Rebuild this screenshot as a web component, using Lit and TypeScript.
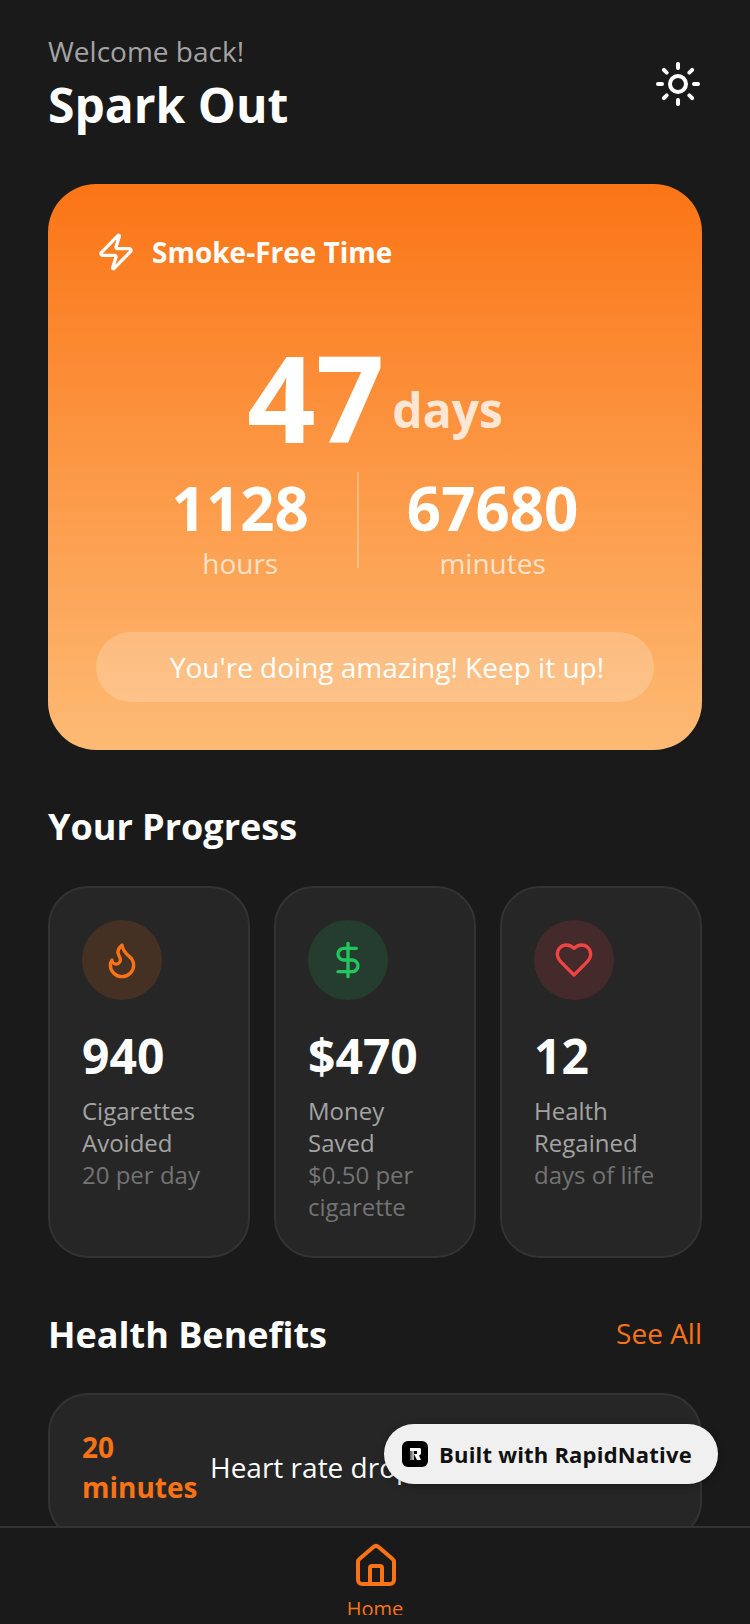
import { LitElement, html, css, svg } from 'lit';
import { customElement } from 'lit/decorators.js';

const icon = (size: number, color: string, body: unknown) => html`<svg
  width=${size}
  height=${size}
  viewBox="0 0 24 24"
  fill="none"
  stroke=${color}
  stroke-width="2"
  stroke-linecap="round"
  stroke-linejoin="round"
>${body}</svg>`;

const sun = svg`<circle cx="12" cy="12" r="4"/><path d="M12 2v2"/><path d="M12 20v2"/><path d="m4.93 4.93 1.41 1.41"/><path d="m17.66 17.66 1.41 1.41"/><path d="M2 12h2"/><path d="M20 12h2"/><path d="m6.34 17.66-1.41 1.41"/><path d="m19.07 4.93-1.41 1.41"/>`;
const zap = svg`<path d="M4 14a1 1 0 0 1-.78-1.63l9.9-10.2a.5.5 0 0 1 .86.46l-1.92 6.02A1 1 0 0 0 13 10h7a1 1 0 0 1 .78 1.63l-9.9 10.2a.5.5 0 0 1-.86-.46l1.92-6.02A1 1 0 0 0 11 14z"/>`;
const flame = svg`<path d="M8.5 14.5A2.5 2.5 0 0 0 11 12c0-1.38-.5-2-1-3-1.072-2.143-.224-4.054 2-6 .5 2.5 2 4.9 4 6.5 2 1.6 3 3.5 3 5.5a7 7 0 1 1-14 0c0-1.153.433-2.294 1-3a2.5 2.5 0 0 0 2.5 2.5z"/>`;
const dollar = svg`<line x1="12" x2="12" y1="2" y2="22"/><path d="M17 5H9.5a3.5 3.5 0 0 0 0 7h5a3.5 3.5 0 0 1 0 7H6"/>`;
const heart = svg`<path d="M19 14c1.49-1.46 3-3.21 3-5.5A5.5 5.5 0 0 0 16.5 3c-1.76 0-3 .5-4.5 2-1.5-1.5-2.74-2-4.5-2A5.5 5.5 0 0 0 2 8.5c0 2.3 1.5 4.05 3 5.5l7 7Z"/>`;
const house = svg`<path d="M15 21v-8a1 1 0 0 0-1-1h-4a1 1 0 0 0-1 1v8"/><path d="M3 10a2 2 0 0 1 .709-1.528l7-5.999a2 2 0 0 1 2.582 0l7 5.999A2 2 0 0 1 21 10v9a2 2 0 0 1-2 2H5a2 2 0 0 1-2-2z"/>`;

const stats = [
  { icon: flame, color: '#f97316', tint: 'rgba(249, 115, 22, 0.15)', value: '940', label: 'Cigarettes Avoided', sub: '20 per day' },
  { icon: dollar, color: '#22c55e', tint: 'rgba(34, 197, 94, 0.15)', value: '$470', label: 'Money Saved', sub: '$0.50 per cigarette' },
  { icon: heart, color: '#ef4444', tint: 'rgba(239, 68, 68, 0.15)', value: '12', label: 'Health Regained', sub: 'days of life' }
];

@customElement('app-root')
export default class AppRoot extends LitElement {
  static styles = css`
    :host {
      display: flex;
      flex-direction: column;
      position: relative;
      height: 1624px;
      overflow: hidden;
      background-color: #1a1a1a;
      color: #fff;
      font-family: 'Open Sans', sans-serif;
    }

    .scroll {
      flex: 1;
      min-height: 0;
      overflow: hidden;
      padding: 30px 48px 0;
    }

    .header {
      display: flex;
      align-items: center;
      justify-content: space-between;
      margin-bottom: 48px;
    }

    .header svg {
      margin-top: 2px;
    }

    .welcome {
      font-size: 28px;
      line-height: 42px;
      color: #a3a3a3;
    }

    .title {
      margin-top: 2px;
      font-size: 48px;
      line-height: 62px;
      font-weight: 700;
    }

    svg {
      display: block;
      flex: none;
    }

    .hero {
      height: 566px;
      box-sizing: border-box;
      padding: 48px;
      border-radius: 48px;
      background: linear-gradient(180deg, #fb7516 0%, #fdba74 100%);
      display: flex;
      flex-direction: column;
    }

    .hero-head {
      display: flex;
      align-items: center;
      gap: 16px;
      font-size: 28px;
      line-height: 34px;
      font-weight: 700;
    }

    .days {
      display: flex;
      justify-content: center;
      align-items: flex-end;
      gap: 8px;
      margin-top: 53px;
      margin-bottom: 3px;
    }

    .days b {
      font-size: 120px;
      line-height: 144px;
      font-weight: 700;
    }

    .days span {
      font-size: 48px;
      line-height: 64px;
      margin-bottom: 27px;
      font-weight: 700;
      color: rgba(255, 255, 255, 0.8);
    }

    .split {
      display: flex;
      justify-content: center;
      align-items: flex-start;
      gap: 48px;
      text-align: center;
    }

    .split .num {
      font-size: 60px;
      line-height: 72px;
      font-weight: 700;
    }

    .split .unit {
      font-size: 28px;
      line-height: 38px;
      color: rgba(255, 255, 255, 0.7);
    }

    .split .rule {
      width: 2px;
      height: 96px;
      background-color: rgba(255, 255, 255, 0.3);
    }

    .pill {
      margin-top: auto;
      height: 70px;
      border-radius: 35px;
      padding-left: 24px;
      background-color: rgba(255, 255, 255, 0.2);
      display: flex;
      align-items: center;
      justify-content: center;
      font-size: 28px;
    }

    h2 {
      margin: 0;
      font-size: 36px;
      line-height: 48px;
      font-weight: 700;
    }

    .progress {
      margin-top: 53px;
    }

    .stats {
      display: grid;
      grid-template-columns: repeat(3, 1fr);
      gap: 24px;
      margin-top: 35px;
    }

    .stat {
      height: 372px;
      box-sizing: border-box;
      padding: 32px;
      border: 2px solid #333;
      border-radius: 40px;
      background-color: #262626;
    }

    .circle {
      width: 80px;
      height: 80px;
      border-radius: 50%;
      display: flex;
      align-items: center;
      justify-content: center;
      margin-bottom: 24px;
    }

    .stat .value {
      margin-bottom: 7px;
      font-size: 48px;
      line-height: 64px;
      font-weight: 700;
    }

    .stat .label {
      font-size: 24px;
      line-height: 32px;
      color: #a3a3a3;
    }

    .stat .sub {
      font-size: 24px;
      line-height: 32px;
      color: #737373;
    }

    .benefits {
      display: flex;
      justify-content: space-between;
      align-items: center;
      margin-top: 53px;
    }

    .see-all {
      margin-bottom: 4px;
      font-size: 28px;
      color: #f97316;
    }

    .row {
      display: flex;
      align-items: center;
      gap: 10px;
      margin-top: 34px;
      padding: 32px;
      border: 2px solid #333;
      border-radius: 40px;
      background-color: #262626;
    }

    .row .when {
      width: 118px;
      flex: none;
      font-size: 28px;
      line-height: 40px;
      font-weight: 700;
      color: #f97316;
    }

    .row .what {
      font-size: 28px;
      line-height: 40px;
    }

    .tabbar {
      flex: none;
      height: 98px;
      box-sizing: border-box;
      border-top: 2px solid #333;
      background-color: #1a1a1a;
      display: flex;
      justify-content: center;
    }

    .tab {
      margin-top: 14px;
      height: 73px;
      overflow: hidden;
      display: flex;
      flex-direction: column;
      align-items: center;
      color: #f97316;
      font-size: 20px;
      line-height: 28px;
    }

    .tab svg {
      margin-left: 2px;
      margin-bottom: 5px;
    }

    .badge {
      position: absolute;
      left: 384px;
      top: 1424px;
      width: 334px;
      height: 60px;
      box-sizing: border-box;
      border-radius: 30px;
      background-color: #f0f0f0;
      box-shadow: 0 2px 8px rgba(0, 0, 0, 0.3);
      display: flex;
      align-items: center;
      gap: 11px;
      padding-left: 18px;
      padding-bottom: 1px;
      color: #111;
      font-size: 22px;
      letter-spacing: 0.2px;
      font-weight: 700;
      white-space: nowrap;
    }

    .badge .logo {
      flex: none;
    }
  `;

  render() {
    return html`
      <div class="scroll">
        <div class="header">
          <div>
            <div class="welcome">Welcome back!</div>
            <div class="title">Spark Out</div>
          </div>
          ${icon(48, '#fff', sun)}
        </div>

        <div class="hero">
          <div class="hero-head">${icon(40, '#fff', zap)}<span>Smoke-Free Time</span></div>
          <div class="days"><b>47</b><span>days</span></div>
          <div class="split">
            <div><div class="num">1128</div><div class="unit">hours</div></div>
            <div class="rule"></div>
            <div><div class="num">67680</div><div class="unit">minutes</div></div>
          </div>
          <div class="pill">You're doing amazing! Keep it up!</div>
        </div>

        <h2 class="progress">Your Progress</h2>
        <div class="stats">
          ${stats.map(
            (s) => html`<div class="stat">
              <div class="circle" style="background-color: ${s.tint}">${icon(40, s.color, s.icon)}</div>
              <div class="value">${s.value}</div>
              <div class="label">${s.label}</div>
              <div class="sub">${s.sub}</div>
            </div>`
          )}
        </div>

        <div class="benefits"><h2>Health Benefits</h2><span class="see-all">See All</span></div>
        <div class="row">
          <div class="when">20 minutes</div>
          <div class="what">Heart rate drops to normal</div>
        </div>
      </div>

      <div class="tabbar">
        <div class="tab">${icon(48, '#f97316', house)}<span>Home</span></div>
      </div>

      <div class="badge">
        <svg class="logo" width="26" height="26" viewBox="0 0 26 26">
          <defs>
            <linearGradient id="stem" x1="0" x2="1" y1="0" y2="0">
              <stop offset="0" stop-color="#555"/>
              <stop offset="1" stop-color="#ccc"/>
            </linearGradient>
          </defs>
          <rect width="26" height="26" rx="6" fill="#000"/>
          <path d="M8 7h10l1 1v5l-2 1.5 2 4.5h-4l-3-6h3V10H8z" fill="#fff"/>
          <path d="M8 10h4v9H8z" fill="url(#stem)"/>
        </svg>
        <span>Built with RapidNative</span>
      </div>
    `;
  }
}
